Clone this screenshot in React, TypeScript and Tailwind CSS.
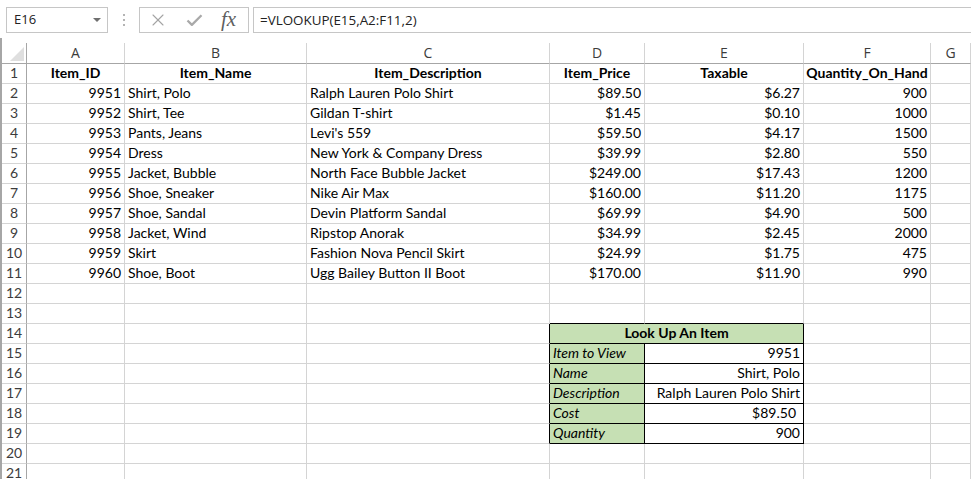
import { X, Check } from 'lucide-react';

type Row = { id: string; name: string; desc: string; price: string; tax: string; qty: string };

const items: Row[] = [
  { id: '9951', name: 'Shirt, Polo', desc: 'Ralph Lauren Polo Shirt', price: '$89.50', tax: '$6.27', qty: '900' },
  { id: '9952', name: 'Shirt, Tee', desc: 'Gildan T-shirt', price: '$1.45', tax: '$0.10', qty: '1000' },
  { id: '9953', name: 'Pants, Jeans', desc: "Levi's 559", price: '$59.50', tax: '$4.17', qty: '1500' },
  { id: '9954', name: 'Dress', desc: 'New York & Company Dress', price: '$39.99', tax: '$2.80', qty: '550' },
  { id: '9955', name: 'Jacket, Bubble', desc: 'North Face Bubble Jacket', price: '$249.00', tax: '$17.43', qty: '1200' },
  { id: '9956', name: 'Shoe, Sneaker', desc: 'Nike Air Max', price: '$160.00', tax: '$11.20', qty: '1175' },
  { id: '9957', name: 'Shoe, Sandal', desc: 'Devin Platform Sandal', price: '$69.99', tax: '$4.90', qty: '500' },
  { id: '9958', name: 'Jacket, Wind', desc: 'Ripstop Anorak', price: '$34.99', tax: '$2.45', qty: '2000' },
  { id: '9959', name: 'Skirt', desc: 'Fashion Nova Pencil Skirt', price: '$24.99', tax: '$1.75', qty: '475' },
  { id: '9960', name: 'Shoe, Boot', desc: 'Ugg Bailey Button II Boot', price: '$170.00', tax: '$11.90', qty: '990' },
];

const lookup: [string, string][] = [
  ['Item to View', '9951'],
  ['Name', 'Shirt, Polo'],
  ['Description', 'Ralph Lauren Polo Shirt'],
  ['Cost', '$89.50'],
  ['Quantity', '900'],
];

const letters = ['A', 'B', 'C', 'D', 'E', 'F', 'G'];
const cellFont = "font-['Lato','Liberation_Sans',sans-serif] text-[14px]";

function Cell({
  children,
  align = 'left',
  bold,
  italic,
  green,
  blackRight,
  blackBottom,
  span2,
  extraPad,
}: {
  children?: React.ReactNode;
  align?: 'left' | 'right' | 'center';
  bold?: boolean;
  italic?: boolean;
  green?: boolean;
  blackRight?: boolean;
  blackBottom?: boolean;
  span2?: boolean;
  extraPad?: boolean;
}) {
  return (
    <div
      className={[
        'h-5 flex items-center pb-px overflow-visible whitespace-nowrap border-r border-b border-[#d4d4d4] text-black leading-none',
        align === 'right' ? 'justify-end' : align === 'center' ? 'justify-center' : 'justify-start',
        extraPad ? 'pl-[3px] pr-[7px]' : 'px-[3px]',
        bold ? 'font-bold' : '',
        italic ? 'italic' : '',
        green ? 'bg-[#c6e0b4]' : 'bg-white',
        blackRight ? 'border-r-black' : '',
        blackBottom ? 'border-b-black' : '',
        span2 ? 'col-span-2' : '',
      ].join(' ')}
    >
      {children}
    </div>
  );
}

function RowHead({ n }: { n: number }) {
  return (
    <div className="h-5 flex items-center justify-center pb-px border-r border-b border-r-[#a6a6a6] border-b-[#d4d4d4] text-[#3c3c3c] text-[14px] leading-none">
      {n}
    </div>
  );
}

export default function App() {
  const rows: React.ReactNode[] = [];

  for (let r = 1; r <= 21; r++) {
    const item = r >= 2 && r <= 11 ? items[r - 2] : null;
    const inBox = r >= 14 && r <= 19;
    const boxTopEdge = r === 13;
    const cells: React.ReactNode[] = [<RowHead key="h" n={r} />];

    if (r === 1) {
      ['Item_ID', 'Item_Name', 'Item_Description', 'Item_Price', 'Taxable', 'Quantity_On_Hand'].forEach((t) =>
        cells.push(
          <Cell key={t} align="center" bold>
            {t}
          </Cell>
        )
      );
      cells.push(<Cell key="g" />);
    } else if (item) {
      cells.push(<Cell key="a" align="right">{item.id}</Cell>);
      cells.push(<Cell key="b">{item.name}</Cell>);
      cells.push(<Cell key="c">{item.desc}</Cell>);
      cells.push(<Cell key="d" align="right">{item.price}</Cell>);
      cells.push(<Cell key="e" align="right">{item.tax}</Cell>);
      cells.push(<Cell key="f" align="right">{item.qty}</Cell>);
      cells.push(<Cell key="g" />);
    } else {
      cells.push(<Cell key="a" />);
      cells.push(<Cell key="b" />);
      // column C carries the left edge of the lookup box
      cells.push(<Cell key="c" blackRight={inBox} />);
      if (r === 14) {
        cells.push(
          <Cell key="de" span2 align="center" bold green blackRight blackBottom>
            Look Up An Item
          </Cell>
        );
      } else if (inBox) {
        const [label, value] = lookup[r - 15];
        cells.push(
          <Cell key="d" italic green blackRight blackBottom>
            {label}
          </Cell>
        );
        cells.push(
          <Cell key="e" align="right" blackRight blackBottom extraPad={label === 'Cost'}>
            {value}
          </Cell>
        );
      } else {
        cells.push(<Cell key="d" blackBottom={boxTopEdge} />);
        cells.push(<Cell key="e" blackBottom={boxTopEdge} />);
      }
      cells.push(<Cell key="f" />);
      cells.push(<Cell key="g" />);
    }
    rows.push(...cells);
  }

  return (
    <div className="w-[971px] h-[479px] overflow-hidden bg-white font-['Open_Sans','Liberation_Sans',sans-serif]">
      {/* formula bar */}
      <div className="h-[38px] flex items-start pt-[7px] pl-[6px]">
        <div className="w-[102px] h-[26px] border border-[#c6c6c6] flex items-center justify-between pl-[7px] pr-[6px] text-[13px] text-[#222]">
          <span>E16</span>
          <svg width="8" height="5" viewBox="0 0 8 5">
            <polygon points="0,0 8,0 4,4" fill="#6f6f6f" />
          </svg>
        </div>
        <div className="w-[31px] h-[26px] flex flex-col items-center justify-center gap-[3px]">
          <span className="w-[2px] h-[2px] bg-[#b4b4b4]" />
          <span className="w-[2px] h-[2px] bg-[#b4b4b4]" />
          <span className="w-[2px] h-[2px] bg-[#b4b4b4]" />
        </div>
        <div className="w-[110px] h-[26px] border border-[#c6c6c6] flex items-center pl-[8px] gap-[16px]">
          <X size={20} strokeWidth={1.3} className="text-[#a4a4a4]" />
          <Check size={21} strokeWidth={2.6} className="text-[#a9a9a9]" strokeLinecap="butt" />
          <span className="font-['Liberation_Serif',serif] italic text-[21px] text-[#5f5f5f] leading-none -mt-[2px]">fx</span>
        </div>
        <div className="flex-1 h-[26px] ml-[4px] border border-r-0 border-[#c6c6c6] flex items-center pl-[6px] text-[13.4px] text-[#222]">
          =VLOOKUP(E15,A2:F11,2)
        </div>
      </div>

      {/* sheet */}
      <div className="pt-[5px] border-l-2 border-[#a6a6a6] h-[441px]">
        <div className="grid grid-cols-[25px_98px_182px_243px_95px_159px_127px_1fr] text-[#3c3c3c]">
          <div className="h-[21px] border-r border-b border-[#a6a6a6] flex items-end justify-end pr-[2px] pb-[2px]">
            <svg width="14" height="14" viewBox="0 0 14 14">
              <polygon points="14,0 14,14 0,14" fill="#dfdfdf" />
            </svg>
          </div>
          {letters.map((l) => (
            <div
              key={l}
              className="h-[21px] flex items-center justify-center pb-px border-r border-b border-r-[#d4d4d4] border-b-[#a6a6a6] text-[14px]"
            >
              {l}
            </div>
          ))}
        </div>
        <div className={`grid grid-cols-[25px_98px_182px_243px_95px_159px_127px_1fr] ${cellFont}`}>{rows}</div>
      </div>
    </div>
  );
}
